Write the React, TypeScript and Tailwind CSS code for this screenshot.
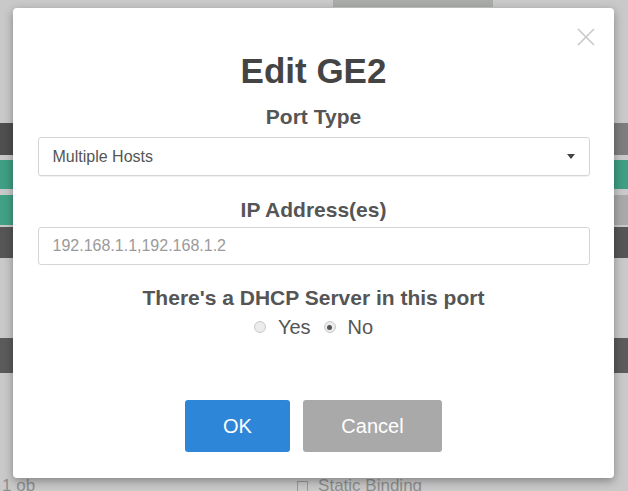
import { useState } from 'react';

const font = { fontFamily: '"Liberation Sans", Arial, Helvetica, sans-serif' };

// 뒤쪽 페이지의 표 행 (모달에 가려져 가장자리만 보임)
function BackdropRows() {
  return (
    <div className="flex flex-col">
      <div className="h-[123px]" />
      <div className="flex h-[32px] justify-between bg-[#4f4f4f]">
        <span />
        <span className="w-[14px] bg-[#7d7d7d]" />
      </div>
      <div className="h-[5px]" />
      <div className="h-[29px] bg-[#3f9e83]" />
      <div className="h-[6px]" />
      <div className="flex h-[30px] justify-between bg-[#42a185]">
        <span />
        <span className="w-[14px] bg-[#a9a9a9]" />
      </div>
      <div className="h-[2px]" />
      <div className="h-[31px] bg-[#565656]" />
      <div className="h-[80px]" />
      <div className="h-[35px] bg-[#5b5b5b]" />
      <div className="h-[103px]" />
      <div className="flex h-[20px] items-start gap-[262px] pl-[2px] text-[17px] leading-[20px] text-[#8e8e8e]">
        <span>1 ob</span>
        <span className="flex items-center gap-[10px]">
          <span className="inline-block h-[11px] w-[11px] border border-[#999]" />
          Static Binding
        </span>
      </div>
    </div>
  );
}

function Radio({ checked, label, onClick }: { checked: boolean; label: string; onClick: () => void }) {
  return (
    <label className="flex cursor-pointer items-center gap-[12px]" onClick={onClick}>
      <span className="flex h-[12px] w-[12px] items-center justify-center rounded-full border border-[#c9c9c9] bg-[#ececec]">
        {checked && <span className="h-[5px] w-[5px] rounded-full bg-[#555]" />}
      </span>
      <span>{label}</span>
    </label>
  );
}

export default function App() {
  const [dhcp, setDhcp] = useState(false);

  return (
    <div className="relative h-[491px] w-[628px] overflow-hidden bg-[#c9c9c9]" style={font}>
      <div className="absolute left-[333px] top-0 h-[7px] w-[160px] bg-[#a9aca9]" />
      <BackdropRows />

      {/* 포트 편집 모달 */}
      <div className="absolute left-[13px] top-[8px] flex h-[470px] w-[601px] flex-col items-center rounded-[4px] bg-white shadow-[0_3px_10px_rgba(0,0,0,0.35)]">
        <button className="absolute right-[19px] top-[20px] text-[#c8c8c8]">
          <svg width="18" height="18" viewBox="0 0 18 18" stroke="currentColor" strokeWidth="1.6" fill="none">
            <path d="M1 1 L17 17 M17 1 L1 17" />
          </svg>
        </button>

        <h2 className="mt-[43px] text-[35px] font-bold leading-[40px] text-[#444]">Edit GE2</h2>

        <div className="mt-[14px] text-[21px] font-bold leading-[24px] text-[#555]">Port Type</div>
        <div className="mt-[8px] flex h-[39px] w-[552px] items-center justify-between rounded-[3px] border border-[#d5d5d5] pl-[14px] pr-[14px] text-[16px] text-[#555] shadow-[0_1px_1px_rgba(0,0,0,0.06)]">
          <span>Multiple Hosts</span>
          <svg width="8" height="5" viewBox="0 0 8 5">
            <path d="M0 0 H8 L4 5 Z" fill="#444" />
          </svg>
        </div>

        <div className="mt-[22px] text-[21px] font-bold leading-[24px] text-[#555]">IP Address(es)</div>
        <div className="mt-[5px] flex h-[38px] w-[552px] items-center rounded-[3px] border border-[#d5d5d5] px-[14px] text-[16px] text-[#9a9a9a]">
          192.168.1.1,192.168.1.2
        </div>

        <div className="mt-[21px] text-[21px] font-bold leading-[24px] text-[#555]">There's a DHCP Server in this port</div>
        <div className="mt-[5px] flex items-center gap-[13px] text-[20px] leading-[24px] text-[#555]">
          <Radio checked={dhcp} label="Yes" onClick={() => setDhcp(true)} />
          <Radio checked={!dhcp} label="No" onClick={() => setDhcp(false)} />
        </div>

        <div className="mt-[61px] flex gap-[13px] text-[20px] text-white">
          <button className="h-[52px] w-[105px] rounded-[3px] bg-[#2d86d8]">OK</button>
          <button className="h-[52px] w-[139px] rounded-[3px] bg-[#a9a9a9]">Cancel</button>
        </div>
      </div>
    </div>
  );
}
